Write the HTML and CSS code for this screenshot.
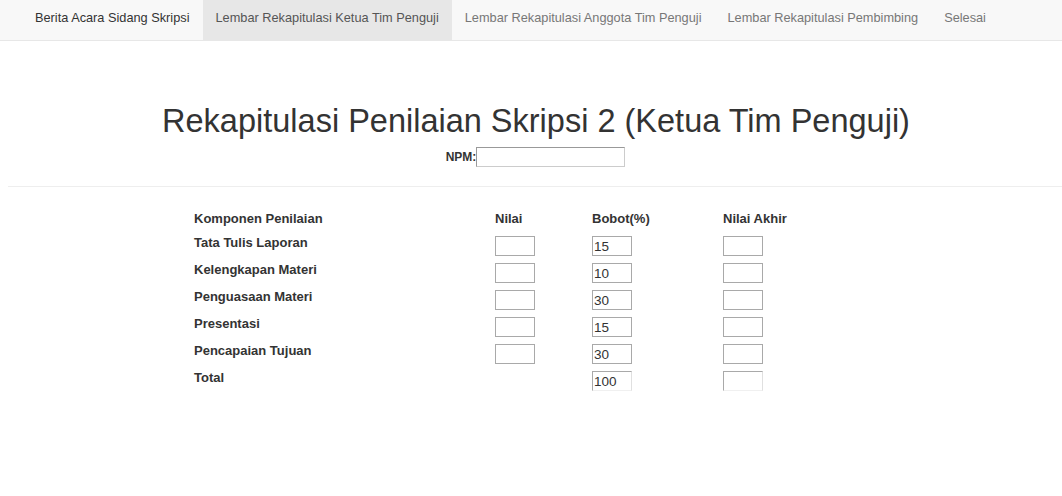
FILE: index.html
```html
<!DOCTYPE html>
<html>
<head>
<meta charset="utf-8">
<link rel="stylesheet" href="styles.css">
</head>
<body>
<nav class="navbar">
  <ul class="nav">
    <li><a class="brand" href="#">Berita Acara Sidang Skripsi</a></li>
    <li class="active"><a href="#">Lembar Rekapitulasi Ketua Tim Penguji</a></li>
    <li><a href="#">Lembar Rekapitulasi Anggota Tim Penguji</a></li>
    <li><a href="#">Lembar Rekapitulasi Pembimbing</a></li>
    <li><a href="#">Selesai</a></li>
  </ul>
</nav>
<main class="page">
  <header class="head">
    <h1 class="title">Rekapitulasi Penilaian Skripsi 2 (Ketua Tim Penguji)</h1>
    <div class="npm"><label class="npm-label">NPM:</label><input class="npm-input" type="text"></div>
  </header>
  <hr class="rule">
  <div class="grid">
    <div class="th">Komponen Penilaian</div><div class="th">Nilai</div><div class="th">Bobot(%)</div><div class="th">Nilai Akhir</div>
    <div class="td">Tata Tulis Laporan</div><div class="cell"><input class="box" type="text"></div><div class="cell"><input class="box" type="text" value="15"></div><div class="cell"><input class="box" type="text"></div>
    <div class="td">Kelengkapan Materi</div><div class="cell"><input class="box" type="text"></div><div class="cell"><input class="box" type="text" value="10"></div><div class="cell"><input class="box" type="text"></div>
    <div class="td">Penguasaan Materi</div><div class="cell"><input class="box" type="text"></div><div class="cell"><input class="box" type="text" value="30"></div><div class="cell"><input class="box" type="text"></div>
    <div class="td">Presentasi</div><div class="cell"><input class="box" type="text"></div><div class="cell"><input class="box" type="text" value="15"></div><div class="cell"><input class="box" type="text"></div>
    <div class="td">Pencapaian Tujuan</div><div class="cell"><input class="box" type="text"></div><div class="cell"><input class="box" type="text" value="30"></div><div class="cell"><input class="box" type="text"></div>
    <div class="td">Total</div><div class="cell"></div><div class="cell"><input class="box last" type="text" value="100"></div><div class="cell"><input class="box last" type="text"></div>
  </div>
</main>
</body>
</html>
```
FILE: styles.css
```css
html, body { margin: 0; padding: 0; overflow: hidden; }
body {
  font-family: "Liberation Sans", Arial, sans-serif;
  font-size: 14px;
  color: #333;
  background: #fff;
  width: 1062px;
  height: 496px;
}
.navbar {
  background: #f8f8f8;
  border-bottom: 1px solid #e7e7e7;
  height: 40px;
  padding-left: 22px;
}
.nav {
  list-style: none;
  margin: 0;
  padding: 0;
  display: flex;
  height: 40px;
  white-space: nowrap;
}
.nav li a {
  display: block;
  height: 40px;
  line-height: 36px;
  padding: 0 13px;
  color: #777;
  text-decoration: none;
  font-size: 12.75px;
}
.nav li a.brand { color: #333; }
.nav li.active a { background: #e7e7e7; color: #555; }
.page {
  margin-left: 8px;
  width: 1056px;
}
.head {
  display: flex;
  flex-direction: column;
  align-items: center;
  padding-top: 61px;
}
.title {
  margin: 0;
  font-size: 32.5px;
  font-weight: normal;
  line-height: 38px;
  color: #333;
}
.npm {
  display: flex;
  align-items: center;
  margin-top: 7px;
  margin-right: 1px;
}
.npm-label {
  font-weight: bold;
  font-size: 12px;
  color: #333;
}
.npm-input {
  width: 149px;
  height: 20px;
  box-sizing: border-box;
  border: 1px solid #ccc;
  border-top-color: #999;
  border-left-color: #999;
  padding: 0 2px;
  margin: 0;
}
.rule {
  border: 0;
  border-top: 1px solid #eee;
  margin: 19px 0 0;
  height: 0;
}
.grid {
  display: grid;
  grid-template-columns: 301px 97px 131px 100px;
  grid-auto-rows: 27px;
  margin-left: 186px;
  margin-top: 18px;
}
.th, .td {
  font-weight: bold;
  font-size: 13px;
  color: #333;
  line-height: 16px;
}
.th { padding-top: 6px; }
.td { padding-top: 3px; }
.box {
  display: block;
  width: 40px;
  height: 20px;
  box-sizing: border-box;
  margin: 4px 0 0;
  padding: 0 1px;
  border: 1px solid #a9a9a9;
  font-family: "Liberation Sans", Arial, sans-serif;
  font-size: 13.5px;
  color: #333;
  background: #fff;
}
.box.last { border-bottom-color: #f0f0f0; border-right-color: #e0e0e0; }
```
